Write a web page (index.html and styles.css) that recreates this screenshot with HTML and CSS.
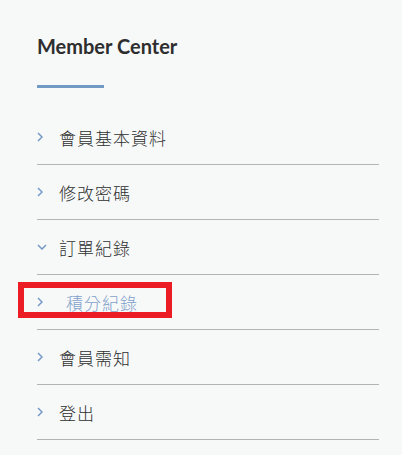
FILE: index.html
```html
<!DOCTYPE html>
<html>
	<head>
		<meta charset="utf-8" />
		<title>Member Center</title>
		<link rel="stylesheet" href="styles.css">
	</head>

	<body>
		<div class="member">
			<h2 class="member-title">Member Center</h2>
			<ul class="member-menu">
				<li>
					<a href="javascript:;">
						<svg class="arrow" width="6" height="10" viewBox="0 0 6 10"><polyline points="1,1 5,5 1,9" /></svg>
						<span>會員基本資料</span>
					</a>
				</li>
				<li>
					<a href="javascript:;">
						<svg class="arrow" width="6" height="10" viewBox="0 0 6 10"><polyline points="1,1 5,5 1,9" /></svg>
						<span>修改密碼</span>
					</a>
				</li>
				<li class="open">
					<a href="javascript:;">
						<svg class="arrow down" width="10" height="6" viewBox="0 0 10 6"><polyline points="1,1 5,5 9,1" /></svg>
						<span>訂單紀錄</span>
					</a>
				</li>
				<li class="sub">
					<a href="javascript:;">
						<svg class="arrow" width="6" height="10" viewBox="0 0 6 10"><polyline points="1,1 5,5 1,9" /></svg>
						<span>積分紀錄</span>
					</a>
					<div class="mark"></div>
				</li>
				<li>
					<a href="javascript:;">
						<svg class="arrow" width="6" height="10" viewBox="0 0 6 10"><polyline points="1,1 5,5 1,9" /></svg>
						<span>會員需知</span>
					</a>
				</li>
				<li>
					<a href="javascript:;">
						<svg class="arrow" width="6" height="10" viewBox="0 0 6 10"><polyline points="1,1 5,5 1,9" /></svg>
						<span>登出</span>
					</a>
				</li>
			</ul>
		</div>
	</body>

</html>
```

FILE: styles.css
```css
body,
ul,
h2 {
	margin: 0;
	padding: 0;
}

body {
	background: #f7f9f9;
}

li {
	list-style: none;
}

.member {
	width: 342px;
	padding: 32px 0 0 37px;
}

.member-title {
	font-family: Lato, "Noto Sans", sans-serif;
	font-size: 20px;
	font-weight: 700;
	line-height: 28px;
	color: #2e2e2e;
	padding-bottom: 22px;
}

.member-title::after {
	content: "";
	display: block;
	width: 67px;
	height: 3px;
	margin-top: 25px;
	background: #7399c6;
}

.member-menu li {
	position: relative;
	border-bottom: 1px solid #b4b4b4;
}

.member-menu li a {
	display: flex;
	align-items: center;
	height: 54px;
	text-decoration: none;
	font-family: "Noto Sans CJK TC", "Noto Sans", sans-serif;
	font-size: 17px;
	font-weight: 300;
	letter-spacing: 1px;
	color: #2e2e2e;
}

.arrow {
	fill: none;
	stroke: #7399c6;
	stroke-width: 1.5;
	margin-right: 16px;
}

.arrow.down {
	margin-right: 12px;
}

.member-menu li.sub a {
	color: #7fa0c9;
}

.member-menu li.sub a span {
	margin-left: 7px;
}

.mark {
	position: absolute;
	left: -19px;
	top: 7px;
	width: 142px;
	height: 24px;
	border: 6px solid #ec1c24;
}
```
